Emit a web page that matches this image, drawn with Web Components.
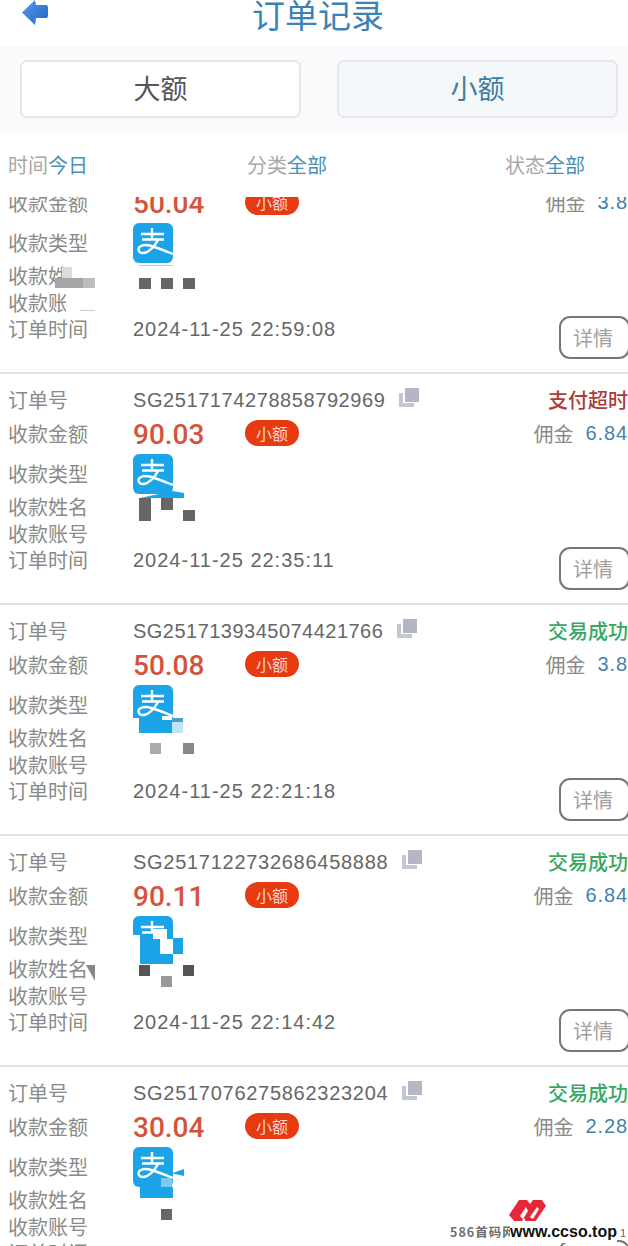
<!DOCTYPE html>
<html lang="zh">
<head>
<meta charset="utf-8">
<title>订单记录</title>
<style>
  html, body { margin: 0; height: 1246px; overflow: hidden; background: #fff; }
  body { font-family: "Noto Sans CJK SC", "Liberation Sans", sans-serif; }
</style>
</head>
<body>
<order-page>
  <page-header title="订单记录"></page-header>
  <amount-tabs></amount-tabs>
  <filter-bar></filter-bar>
  <order-list>
    <order-card number="SG2517174278858792960" amount="50.04" fee="3.8" time="2024-11-25 22:59:08">
      <mask-patch style="left:139px;top:122px;width:34px;height:1px;background:#c4c4c4"></mask-patch>
      <mask-patch style="left:72px;top:118px;width:24px;height:18px;background:#fff"></mask-patch>
      <mask-patch style="left:55px;top:135px;width:28px;height:10px;background:#a6a6a6"></mask-patch>
      <mask-patch style="left:62px;top:124px;width:10px;height:11px;background:#dcdcdc"></mask-patch>
      <mask-patch style="left:83px;top:135px;width:12px;height:10px;background:#bdbdbd"></mask-patch>
      <mask-patch style="left:66px;top:146px;width:30px;height:24px;background:#fff"></mask-patch>
      <mask-patch style="left:80px;top:167px;width:15px;height:1px;background:#ccc"></mask-patch>
      <mask-patch style="left:139px;top:135px;width:12px;height:11px;background:#666"></mask-patch>
      <mask-patch style="left:161px;top:135px;width:12px;height:11px;background:#666"></mask-patch>
      <mask-patch style="left:183px;top:135px;width:12px;height:11px;background:#666"></mask-patch>
    </order-card>
    <order-card number="SG2517174278858792969" amount="90.03" fee="6.84" time="2024-11-25 22:35:11" status="支付超时" tone="bad">
      <mask-patch style="left:140px;top:117px;width:44px;height:7px;background:#1aa4e6;clip-path:polygon(0 100%,75% 0,100% 30%,100% 100%)"></mask-patch>
      <mask-patch style="left:139px;top:124px;width:12px;height:23px;background:#666"></mask-patch>
      <mask-patch style="left:161px;top:124px;width:12px;height:12px;background:#666"></mask-patch>
      <mask-patch style="left:183px;top:136px;width:12px;height:11px;background:#666"></mask-patch>
    </order-card>
    <order-card number="SG2517139345074421766" amount="50.08" fee="3.8" time="2024-11-25 22:21:18" status="交易成功" tone="ok" style="--track:.48px">
      <mask-patch style="left:133px;top:113px;width:6px;height:13px;background:#fff"></mask-patch>
      <mask-patch style="left:139px;top:113px;width:33px;height:15px;background:#1aa4e6"></mask-patch>
      <mask-patch style="left:162px;top:111px;width:10px;height:4px;background:#fff"></mask-patch>
      <mask-patch style="left:172px;top:113px;width:11px;height:15px;background:#bfe3f7"></mask-patch>
      <mask-patch style="left:172px;top:113px;width:11px;height:4px;background:#4a9fc8"></mask-patch>
      <mask-patch style="left:150px;top:138px;width:11px;height:11px;background:#aaa"></mask-patch>
      <mask-patch style="left:183px;top:138px;width:11px;height:11px;background:#888"></mask-patch>
    </order-card>
    <order-card number="SG2517122732686458888" amount="90.11" fee="6.84" time="2024-11-25 22:14:42" status="交易成功" tone="ok" style="--track:.72px">
      <mask-patch style="left:133px;top:99px;width:7px;height:24px;background:#fff"></mask-patch>
      <mask-patch style="left:140px;top:99px;width:33px;height:29px;background:#1aa4e6"></mask-patch>
      <mask-patch style="left:173px;top:102px;width:10px;height:16px;background:#1aa4e6"></mask-patch>
      <mask-patch style="left:153px;top:93px;width:14px;height:10px;background:#fff"></mask-patch>
      <mask-patch style="left:160px;top:103px;width:13px;height:15px;background:#fff"></mask-patch>
      <mask-patch style="left:139px;top:129px;width:11px;height:11px;background:#555"></mask-patch>
      <mask-patch style="left:183px;top:129px;width:11px;height:11px;background:#555"></mask-patch>
      <mask-patch style="left:161px;top:140px;width:11px;height:11px;background:#999"></mask-patch>
      <mask-patch style="left:86px;top:129px;width:9px;height:16px;background:#888;clip-path:polygon(0 0,100% 0,100% 100%)"></mask-patch>
    </order-card>
    <order-card number="SG2517076275862323204" amount="30.04" fee="2.28" time="2024-11-25 22:09:31" status="交易成功" tone="ok" style="--track:.72px">
      <mask-patch style="left:133px;top:120px;width:7px;height:4px;background:#fff"></mask-patch>
      <mask-patch style="left:140px;top:120px;width:33px;height:11px;background:#1aa4e6"></mask-patch>
      <mask-patch style="left:161px;top:111px;width:11px;height:9px;background:#7cc8ee"></mask-patch>
      <mask-patch style="left:172px;top:102px;width:12px;height:7px;background:#1aa4e6;clip-path:polygon(0 60%,100% 0,100% 100%)"></mask-patch>
      <mask-patch style="left:161px;top:142px;width:11px;height:11px;background:#666"></mask-patch>
    </order-card>
  </order-list>
  <site-stamp></site-stamp>
</order-page>

<script>
  const define = (name, css, html) => {
    customElements.define(
      name,
      class extends HTMLElement {
        constructor() {
          super();
          this.attachShadow({ mode: "open" });
        }

        connectedCallback() {
          this.shadowRoot.innerHTML = `<style>${css}</style>${html(this)}`;
        }
      }
    );
  };

  define("order-page", `
    :host { display: block; position: relative; width: 628px; height: 1246px; overflow: hidden; color: #888; }
  `, () => `<slot></slot>`);

  define("page-header", `
    :host { display: flex; position: relative; height: 46px; justify-content: center; background: #fff; }
    h1 { margin: 0 0 0 8px; font-size: 33px; line-height: 28px; font-weight: 400; color: #3b82b6; }
    svg { position: absolute; left: 22px; top: 0; }
  `, (el) => `
    <svg width="27" height="26" viewBox="0 0 27 26">
      <defs><linearGradient id="g" x1="0" y1="0" x2="1" y2="1"><stop offset="0" stop-color="#5a9bea"/><stop offset="1" stop-color="#1f62c8"/></linearGradient></defs>
      <path d="M0 12.5 L13 0 L14 5 L24 5 Q26 5 26 8 L26 15 Q26 18 24 18 L14 18 L13 25 Z" fill="url(#g)"/>
    </svg>
    <h1>${el.getAttribute("title")}</h1>
  `);

  define("amount-tabs", `
    :host { display: flex; height: 86px; box-sizing: border-box; padding: 14px 10px 14px 20px; gap: 36px; background: #fafafc; }
    div { flex: 0 0 281px; box-sizing: border-box; display: grid; place-items: center; padding-bottom: 3px; border: 2px solid #e6e7ec; border-radius: 7px; font-size: 27px; background: #fff; color: #555; }
    .on { background: #f4f8fb; color: #3d809e; }
  `, () => `<div>大额</div><div class="on">小额</div>`);

  define("filter-bar", `
    :host { display: grid; grid-template-columns: 239px 258px auto; height: 65px; box-sizing: border-box; padding: 0 0 0 8px; align-items: center; background: #fff; font-size: 20px; color: #a8a8a8; }
    b { font-weight: 400; color: #4a90b6; }
  `, () => `<span>时间<b>今日</b></span><span>分类<b>全部</b></span><span>状态<b>全部</b></span>`);

  define("order-list", `
    :host { display: block; height: 1049px; overflow: hidden; background: #fff; }
    div { margin-top: -54px; }
  `, () => `<div><slot></slot></div>`);

  define("order-card", `
    :host { display: block; position: relative; height: 231px; box-sizing: border-box; border-bottom: 2px solid #e2e2e2; }
    .rows { display: grid; grid-template-columns: 125px 1fr auto; grid-template-rows: 34px 34px 46px 20px 34px 18px; padding: 8px 0 0 8px; font-size: 20px; color: #8a8a8a; }
    .rows > * { display: flex; align-items: center; white-space: nowrap; }
    .wide { grid-column: 2 / 4; }
    .num, .time { font-family: "Liberation Sans", sans-serif; color: #666; padding-top: 2px; }
    .num { font-size: 20px; letter-spacing: var(--track, .58px); gap: 14px; }
    .num svg { margin-top: -6px; }
    .time { font-size: 20px; letter-spacing: 1px; }
    .amount { width: 112px; margin-top: 2px; font: 500 28px Roboto, sans-serif; color: #d5533b; }
    .badge { width: 54px; height: 26px; display: grid; place-items: center; border-radius: 13px; background: #e83a10; color: #fbd9cf; font-size: 16px; }
    .status { justify-content: flex-end; font-weight: 500; }
    .bad { color: #ab3c3c; }
    .ok { color: #37a862; }
    .fee { justify-content: flex-end; gap: 12px; color: #8a8a8a; }
    .fee b { font: 400 20px "Liberation Sans", sans-serif; letter-spacing: .9px; color: #3f83ab; }
    .more { grid-column: 3; justify-self: end; align-self: start; box-sizing: border-box; width: 71px; height: 43px; margin: -3px -2px 0 0; justify-content: center; padding-right: 3px; border: 2px solid #777; border-radius: 11px; color: #a0a0a0; }
  `, (el) => {
    const get = (name) => el.getAttribute(name) ?? "";
    return `
      <div class="rows">
        <span>订单号</span>
        <span class="num">${get("number")}
          <svg width="20" height="19" viewBox="0 0 20 19"><path d="M6 0h14v14H6z" fill="#b4b6c4"/><path d="M0 5h4v10h11v4H0z" fill="#c4c6d2"/></svg>
        </span>
        <span class="status ${get("tone")}">${get("status")}</span>
        <span>收款金额</span>
        <span><span class="amount">${get("amount")}</span><span class="badge">小额</span></span>
        <span class="fee">佣金 <b>${get("fee")}</b></span>
        <span>收款类型</span>
        <span class="wide"><alipay-mark></alipay-mark></span>
        <span>收款姓名</span><span class="wide"></span>
        <span>收款账号</span><span class="wide"></span>
        <span>订单时间</span>
        <span class="time">${get("time")}</span>
        <span class="more">详情</span>
      </div>
      <slot></slot>
    `;
  });

  define("alipay-mark", `
    :host { display: block; width: 40px; height: 40px; margin-top: 2px; }
    svg { display: block; }
  `, () => `
    <svg width="40" height="40" viewBox="0 0 40 40">
      <rect width="40" height="40" rx="6" fill="#1ba5e8"/>
      <path d="M19 5V16M8 11H31M9 16.5H31M25 17C21.5 24 15 30 10 30C5 30 4 25 8 23C14 20 22 24 40 31" fill="none" stroke="#fff" stroke-width="2.4"/>
    </svg>
  `);

  define("mask-patch", `
    :host { display: block; position: absolute; }
  `, () => ``);

  define("site-stamp", `
    :host { display: block; position: absolute; left: 450px; top: 1198px; width: 178px; height: 48px; }
    svg { position: absolute; left: 59px; top: 1px; }
    .cn { position: absolute; left: 0; top: 25px; font: 700 12.5px/18px "Noto Sans CJK SC", sans-serif; letter-spacing: 1px; color: #6e6e6e; }
    .en { position: absolute; left: 60px; top: 23px; font: 700 16px/22px "Liberation Sans", sans-serif; color: #111; background: #fff; }
    .end { position: absolute; left: 170px; top: 28px; font: 400 11px/14px "Liberation Sans", sans-serif; color: #666; }
  `, () => `
    <svg width="37" height="24" viewBox="0 0 37 24">
      <path fill-rule="evenodd" d="M0 16L10 1H18L21 5L24 1H33L37 7L26 23H17L15 19L12 23H6ZM11 17L17 8L19 12L14 20ZM21 18L28 8L30 10L24 20Z" fill="#e8283a"/>
    </svg>
    <span class="cn">586首码网</span>
    <span class="en">www.ccso.top</span>
    <span class="end">1</span>
  `);
</script>
</body>
</html>
